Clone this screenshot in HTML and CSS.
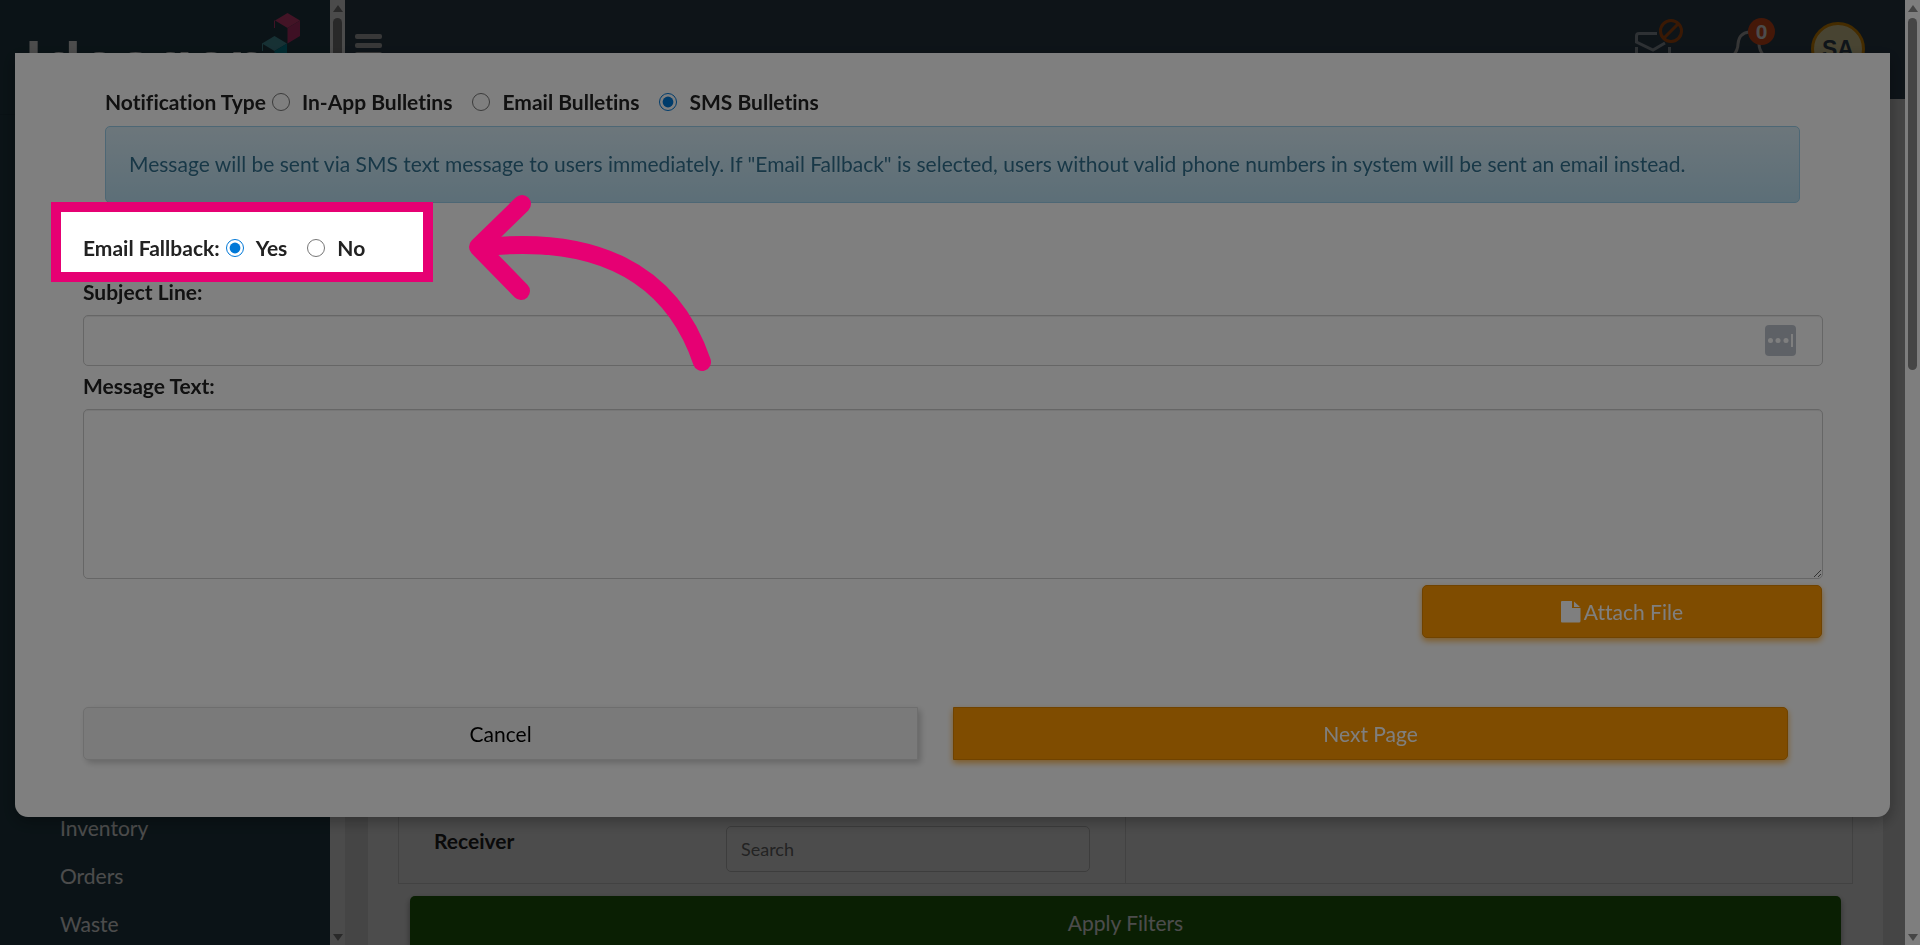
FILE: index.html
```
<!DOCTYPE html>
<html lang="en">

<head>
    <meta charset="UTF-8">
    <meta name="viewport" content="width=device-width, initial-scale=1.0">
    <title>Bulletins</title>
    <link rel="stylesheet" href="styles.css">
</head>

<body>
    <div class="page">
        <!-- Sidebar -->
        <nav class="sidebar">
            <div class="logo">
                <span class="logo-text">Ideagen</span>
                <svg class="logo-mark" width="40" height="60" viewBox="0 0 40 60">
                    <path fill="#e0447f" d="M25.500 0L38 7.500L25.500 15L13 7.500Z" />
                    <path fill="#d03878" d="M25.500 15L38 7.500V23L25.500 30.500Z" />
                    <path stroke="#d8407f" fill="none" d="M12.500 7.500V15" />
                    <path fill="#4fa3b0" d="M12.500 23L25 30.500L12.500 38L0 30.500Z" />
                    <path fill="#0090a4" d="M12.500 38L25 30.500V46L12.500 53.500Z" />
                    <path stroke="#4fa3b0" fill="none" d="M.5 30.500V38" />
                </svg>
            </div>
            <ul class="nav-links">
                <li><a href="#inventory">Inventory</a></li>
                <li><a href="#orders">Orders</a></li>
                <li><a href="#waste">Waste</a></li>
            </ul>
        </nav>
        <div class="scrollbar">
            <span class="arrow-up"></span>
            <span class="thumb"></span>
            <span class="arrow-down"></span>
        </div>

        <!-- Main area -->
        <div class="main">
            <header class="header">
                <button class="menu-button" aria-label="Menu"><span></span><span></span><span></span></button>
                <div class="header-icons">
                    <svg class="mail-icon" width="50" height="50" viewBox="0 0 50 50" fill="none">
                        <path stroke="#9aa4ad" stroke-width="3" d="M24 15.500H6Q3.500 15.500 3.500 18V24L20 32L32 25M3.500 29V46H36.500V29" />
                        <circle cx="38" cy="13" r="10.500" stroke="#c4560f" stroke-width="3" />
                        <path stroke="#c4560f" stroke-width="3" d="M31 20L45 6" />
                    </svg>
                    <div class="bell">
                        <svg width="46" height="50" viewBox="0 0 46 50" fill="none">
                            <path stroke="#b4b4b4" stroke-width="3" stroke-linecap="round" d="M17 14Q7 15 6 26Q6 32 1 38H32Q27 32 27 26" />
                        </svg>
                        <span class="badge">0</span>
                    </div>
                    <span class="avatar">SA</span>
                </div>
            </header>
            <div class="content">
                <div class="filters">
                    <div class="filter-row">
                        <div class="filter-cell">
                            <label for="receiver">Receiver</label>
                            <input type="text" id="receiver" placeholder="Search">
                        </div>
                        <div class="filter-cell"></div>
                    </div>
                    <button class="apply-button">Apply Filters</button>
                </div>
            </div>
        </div>
        <div class="scrollbar page-scrollbar">
            <span class="arrow-up"></span>
            <span class="thumb"></span>
            <span class="arrow-down"></span>
        </div>
    </div>

    <!-- Bulletin Modal -->
    <div class="modal-backdrop">
        <form class="modal">
            <div class="radio-row notification-type">
                <span class="row-label">Notification Type</span>
                <input type="radio" name="type" id="type-app"><label for="type-app">In-App Bulletins</label>
                <input type="radio" name="type" id="type-email"><label for="type-email">Email Bulletins</label>
                <input type="radio" name="type" id="type-sms" checked><label for="type-sms">SMS Bulletins</label>
            </div>
            <div class="alert">Message will be sent via SMS text message to users immediately. If "Email Fallback" is selected, users without valid phone numbers in system will be sent an email instead.</div>
            <div class="radio-row fallback">
                <span class="row-label">Email Fallback:</span>
                <input type="radio" name="fallback" id="fallback-yes" checked><label for="fallback-yes">Yes</label>
                <input type="radio" name="fallback" id="fallback-no"><label for="fallback-no">No</label>
            </div>
            <label class="field-label" for="subject">Subject Line:</label>
            <div class="subject-field">
                <input type="text" id="subject">
                <svg class="password-icon" width="31" height="31" viewBox="0 0 31 31">
                    <rect width="31" height="31" rx="4" fill="#bdc3cd" />
                    <g fill="#fff">
                        <circle cx="5.500" cy="15.500" r="2.500" />
                        <circle cx="13" cy="15.500" r="2.500" />
                        <circle cx="21" cy="15.500" r="2.500" />
                        <rect x="26" y="9" width="2" height="13" />
                    </g>
                </svg>
            </div>
            <label class="field-label" for="message">Message Text:</label>
            <textarea id="message"></textarea>
            <button type="button" class="btn btn-orange attach-button">
                <svg width="20" height="22" viewBox="0 0 20 22" fill="#fff">
                    <path d="M0 1Q0 0 1 0H11V7H19.500V20Q19.500 21.500 18 21.500H1Q0 21.500 0 20.500ZM13 0.500L19 6H13Z" />
                </svg>
                Attach File
            </button>
            <div class="actions">
                <button type="button" class="btn btn-cancel">Cancel</button>
                <button type="button" class="btn btn-orange btn-next">Next Page</button>
            </div>
        </form>
    </div>

    <!-- Walkthrough highlight -->
    <div class="highlight"></div>
    <svg class="highlight-arrow" width="260" height="190" viewBox="0 0 260 190" fill="none" stroke="#e60073" stroke-width="18" stroke-linecap="round" stroke-linejoin="round">
        <path d="M62 14L18 57L61 101" />
        <path d="M24 57C130 46 210 78 242 172" />
    </svg>
</body>

</html>
```

FILE: styles.css
```
* {
    box-sizing: border-box;
}

body {
    margin: 0;
    font-family: Lato, sans-serif;
    font-size: 21px;
    font-variant-ligatures: none;
    line-height: 30px;
    color: #222;
    overflow: hidden;
}

button,
input,
textarea {
    font-family: inherit;
    font-size: inherit;
    font-variant-ligatures: inherit;
}

.page {
    display: flex;
    height: 100vh;
}

/* Sidebar */
.sidebar {
    display: flex;
    flex-direction: column;
    justify-content: space-between;
    width: 330px;
    background-color: #25414d;
}

.logo {
    display: flex;
    align-items: flex-start;
    height: 115px;
    padding: 13px 0 0 25px;
    border-bottom: 1px solid #1f3a46;
}

.logo-text {
    width: 237px;
    padding-top: 13px;
    font-family: Inter, sans-serif;
    font-size: 62px;
    font-weight: 600;
    line-height: 75px;
    color: #fff;
}

.logo-mark {
    flex: none;
}

.nav-links {
    list-style: none;
    margin: 0;
    padding: 0 60px;
}

.nav-links li {
    height: 48px;
    padding-top: 12px;
}

.nav-links a {
    color: #fff;
    text-decoration: none;
}

/* Scrollbars */
.scrollbar {
    display: flex;
    flex-direction: column;
    align-items: center;
    width: 15px;
    padding: 5px 0 4px;
    background-color: #fcfcfc;
}

.arrow-up,
.arrow-down {
    border-left: 5px solid transparent;
    border-right: 5px solid transparent;
}

.arrow-up {
    border-bottom: 7px solid #8b8b8b;
}

.arrow-down {
    border-top: 7px solid #8b8b8b;
    margin-top: auto;
}

.thumb {
    width: 9px;
    height: 352px;
    margin-top: 6px;
    border-radius: 5px;
    background-color: #8b8b8b;
}

/* Header */
.main {
    flex: 1;
    display: flex;
    flex-direction: column;
}

.header {
    display: flex;
    justify-content: space-between;
    height: 99px;
    padding: 0 40px 0 10px;
    background-color: #2f4353;
}

.menu-button {
    display: flex;
    flex-direction: column;
    gap: 4px;
    width: 27px;
    margin-top: 34px;
    padding: 0;
    border: none;
    background: none;
}

.menu-button span {
    width: 27px;
    height: 5px;
    border-radius: 2px;
    background-color: #bbb;
}

.header-icons {
    display: flex;
    align-items: flex-start;
    padding-top: 18px;
}

.mail-icon {
    margin-right: 49px;
}

.bell {
    position: relative;
    width: 79px;
}

.badge {
    position: absolute;
    top: 0;
    left: 16px;
    width: 27px;
    height: 27px;
    border-radius: 50%;
    background-color: #e8501c;
    color: #fff;
    font-family: "Liberation Sans", sans-serif;
    font-weight: bold;
    line-height: 27px;
    text-align: center;
}

.avatar {
    width: 54px;
    height: 54px;
    margin-top: 4px;
    border: 3px solid #e69500;
    border-radius: 50%;
    background-color: #f2e3a8;
    color: #324657;
    font-family: "Liberation Sans", sans-serif;
    font-size: 23px;
    font-weight: bold;
    line-height: 48px;
    text-align: center;
}

/* Filters */
.content {
    flex: 1;
    display: flex;
    padding: 0 22px 0 23px;
    background-color: #e6e6e6;
}

.filters {
    flex: 1;
    display: flex;
    flex-direction: column;
    padding: 0 30px;
    background-color: #fff;
}

.filter-row {
    display: flex;
    flex: 1;
    border: 1px solid #ddd;
}

.filter-cell {
    flex: 1;
    display: flex;
    align-items: flex-end;
    padding: 0 35px 11px;
}

.filter-cell:first-child {
    border-right: 1px solid #ddd;
}

.filter-cell label {
    width: 292px;
    margin-bottom: 16px;
    font-weight: bold;
}

.filter-cell input {
    flex: 1;
    height: 46px;
    padding: 0 14px;
    border: 1px solid #ccc;
    border-radius: 5px;
    font-size: 18px;
}

.apply-button {
    height: 49px;
    padding: 4px 0 0;
    border: none;
    border-radius: 5px 5px 0 0;
    margin: 12px 12px 0;
    background-color: #22680a;
    color: #fff;
    box-shadow: 0 3px 6px rgba(0, 0, 0, 0.4);
}

/* Modal */
.modal-backdrop {
    position: fixed;
    top: 0;
    left: 0;
    right: 15px;
    bottom: 0;
    padding: 53px 15px;
    background-color: rgba(0, 0, 0, 0.4);
}

.modal {
    display: flex;
    flex-direction: column;
    padding: 34px 67px 57px 68px;
    border-radius: 0 0 13px 13px;
    background-color: #fff;
    box-shadow: 0 5px 15px rgba(0, 0, 0, 0.3);
}

.radio-row {
    display: flex;
    align-items: center;
    font-weight: bold;
}

.radio-row input {
    width: 18px;
    height: 18px;
    margin: 0 12px 0 0;
    accent-color: #0078d7;
}

.radio-row label {
    margin-right: 20px;
}

.row-label {
    margin-right: 6px;
}

.notification-type {
    margin-left: 22px;
    margin-bottom: 9px;
}

.alert {
    margin: 0 23px 30px 22px;
    padding: 22px 23px 23px;
    border: 1px solid #9acfea;
    border-radius: 5px;
    background-image: linear-gradient(#d9edf7, #b9def0);
    color: #31708f;
    text-shadow: 0 1px 0 rgba(255, 255, 255, 0.2);
}

.fallback {
    margin-bottom: 14px;
}

.field-label {
    margin-bottom: 8px;
    font-weight: bold;
}

.subject-field {
    position: relative;
    margin-bottom: 5px;
}

.subject-field input,
.modal textarea {
    display: block;
    width: 100%;
    height: 51px;
    padding: 6px 12px;
    border: 1px solid #ccc;
    border-radius: 5px;
    box-shadow: inset 0 1px 1px rgba(0, 0, 0, 0.075);
}

.modal textarea {
    height: 170px;
}

.password-icon {
    position: absolute;
    top: 10px;
    right: 27px;
}

.btn {
    display: flex;
    align-items: center;
    justify-content: center;
    gap: 3px;
    height: 53px;
    border-radius: 5px;
}

.btn-orange {
    border: 1px solid #e08600;
    background-color: #ff9800;
    color: #fff;
    box-shadow: 0 3px 6px rgba(255, 152, 0, 0.7);
}

.attach-button {
    width: 23%;
    margin: 6px 1px 69px auto;
}

.actions {
    display: flex;
}

.actions .btn {
    width: 48%;
    margin-right: 2%;
}

.btn-cancel {
    border: 1px solid #ddd;
    border-radius: 5px 0 0 5px;
    background-color: #f5f5f5;
    color: #000;
    box-shadow: 3px 3px 6px rgba(0, 0, 0, 0.2);
}

.actions .btn-next {
    border-radius: 0 5px 5px 0;
}

/* Walkthrough highlight */
.highlight {
    position: fixed;
    top: 202px;
    left: 51px;
    width: 382px;
    height: 80px;
    border: 10px solid #e60073;
    box-shadow: 0 0 0 9999px rgba(0, 0, 0, 0.5);
}

.highlight-arrow {
    position: fixed;
    top: 190px;
    left: 460px;
}
```
